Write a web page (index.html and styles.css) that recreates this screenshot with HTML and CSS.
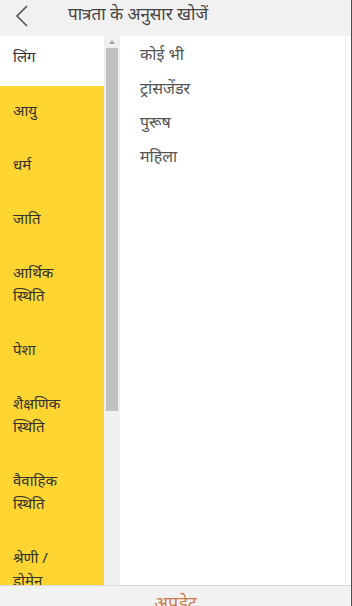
FILE: index.html
```html
<!DOCTYPE html>
<html lang="hi">
<head>
<meta charset="utf-8">
<link rel="stylesheet" href="styles.css">
</head>
<body>
<div class="app">
  <header class="header">
    <svg class="back" width="16" height="22" viewBox="0 0 16 22"><path d="M13 1 L3 11 L13 21" fill="none" stroke="#555" stroke-width="1.6"/></svg>
    <div class="title">पात्रता के अनुसार खोजें</div>
  </header>
  <div class="main">
    <div class="cats">
      <div class="cat active">लिंग</div>
      <div class="cat">आयु</div>
      <div class="cat">धर्म</div>
      <div class="cat">जाति</div>
      <div class="cat">आर्थिक<br>स्थिति</div>
      <div class="cat">पेशा</div>
      <div class="cat">शैक्षणिक<br>स्थिति</div>
      <div class="cat">वैवाहिक<br>स्थिति</div>
      <div class="cat">श्रेणी /<br>डोमेन</div>
    </div>
    <div class="scrollbar">
      <div class="arrow"></div>
      <div class="thumb"></div>
    </div>
    <div class="options">
      <div class="opt">कोई भी</div>
      <div class="opt">ट्रांसजेंडर</div>
      <div class="opt">पुरूष</div>
      <div class="opt">महिला</div>
    </div>
    <div class="edge"></div>
  </div>
  <footer class="footer"><span class="update">अपडेट</span></footer>
</div>
</body>
</html>
```
FILE: styles.css
```css
html, body {
  margin: 0;
  padding: 0;
  background: #fff;
}
body {
  font-family: "Noto Sans", sans-serif;
  color: #333;
}
.app {
  width: 352px;
  height: 606px;
  overflow: hidden;
  display: flex;
  flex-direction: column;
  border-right: 1px solid #3d5566;
  box-sizing: border-box;
}
.header {
  height: 36px;
  flex: none;
  background: #f1f1f1;
  display: flex;
  align-items: center;
}
.back {
  margin-left: 14px;
  margin-top: -4px;
}
.title {
  margin-left: 38px;
  font-size: 17px;
  color: #444;
  margin-top: -9px;
}
.main {
  flex: none;
  height: 549px;
  display: flex;
  overflow: hidden;
}
.cats {
  width: 104px;
  flex: none;
  background: #fed531;
  overflow: hidden;
}
.cat {
  padding: 13px 10px 18px 13px;
  font-size: 15px;
  line-height: 23px;
  color: #333;
}
.cat.active {
  background: #fff;
  padding-top: 9px;
}
.scrollbar {
  width: 16px;
  flex: none;
  background: #f0f0f0;
}
.arrow {
  margin: 4px auto 0;
  width: 0;
  height: 0;
  border-left: 3px solid transparent;
  border-right: 3px solid transparent;
  border-bottom: 4px solid #a3a3a3;
}
.thumb {
  margin: 4px 2px 0;
  height: 363px;
  background: #c1c1c1;
}
.options {
  flex: 1;
  background: #fff;
  padding-left: 20px;
  padding-top: 1px;
}
.opt {
  font-size: 16px;
  line-height: 34px;
  color: #555;
}
.edge {
  width: 5px;
  flex: none;
  background: #fff;
  border-left: 1px solid #f1f1f1;
}
.footer {
  flex: 1;
  border-top: 1px solid #d9d9d9;
  background: #f2f2f2;
  text-align: center;
}
.update {
  display: inline-block;
  font-size: 18px;
  line-height: 20px;
  margin-top: 6px;
  color: #cc7a4a;
}
```
